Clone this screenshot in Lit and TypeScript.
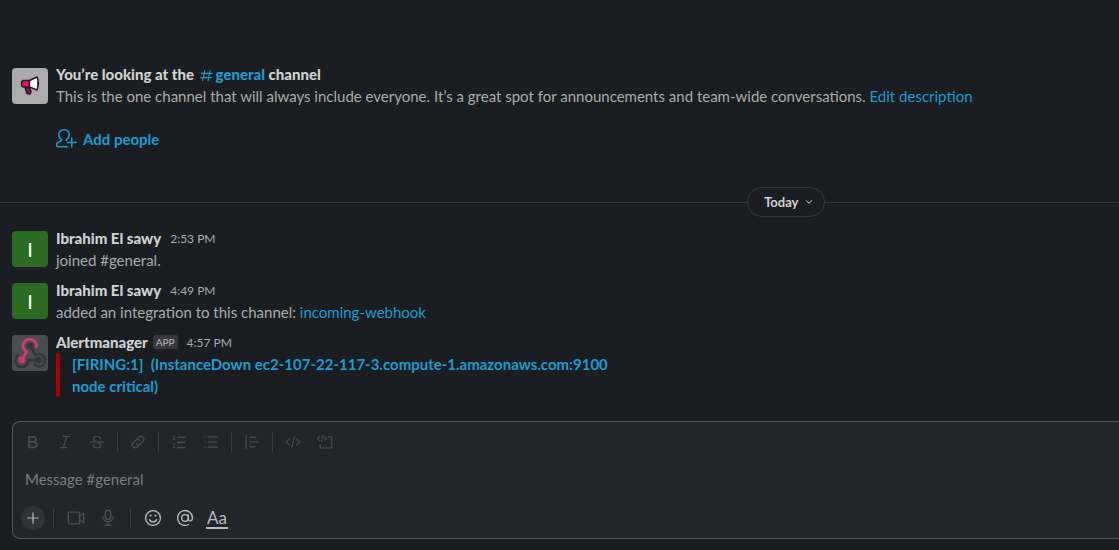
import { LitElement, html, svg, css, nothing, TemplateResult } from "lit";
import { customElement, property } from "lit/decorators.js";

const icons: Record<string, TemplateResult> = {
  bold: svg`<path stroke-width="2.200" d="M5 3.500h5.500a3.200 3.200 0 0 1 0 6.400H5zM5 9.900h6.200a3.400 3.400 0 0 1 0 6.800H5z"/>`,
  italic: svg`<path d="M8 3h8M4 17h8M12 3L8 17"/>`,
  strike: svg`<path d="M1.500 10h17M14.200 6C13.700 4 12 2.800 10 2.800c-2.500 0-4.300 1.300-4.300 3.500C5.700 8.500 7.500 9.400 10 10c2.700.600 4.400 1.500 4.400 3.600s-1.900 3.600-4.400 3.600-4.200-1.200-4.600-3.400"/>`,
  link: svg`<path d="M9.200 5.500l1.700-1.700a3.750 3.750 0 0 1 5.300 5.300l-2.900 2.900a3.750 3.750 0 0 1-5.300 0M10.800 14.500l-1.700 1.700a3.750 3.750 0 0 1-5.300-5.300l2.900-2.900a3.750 3.750 0 0 1 5.300 0"/>`,
  ordered: svg`<path d="M8 4h10M8 10.500h10M8 17h10"/><path stroke-width="1" d="M2.500 3l1.500-1v4.500M2.500 6.500h3M2.500 12.800c.500-1.200 2.700-1 2.700.300 0 1.100-2.700 2.500-2.700 3.900h3"/>`,
  bullets: svg`<path d="M6.500 3.500h11.500M6.500 10h11.500M6.500 16.500h11.500M2 3.500h.500M2 10h.500M2 16.500h.500"/>`,
  quote: svg`<path d="M2.500 2v16M7 4h8M7 10h11M7 16h7"/>`,
  code: svg`<path d="M5.500 6L1.500 10l4 4M14.500 6l4 4-4 4M11.500 3.500l-3 13"/>`,
  block: svg`<path d="M14 3.500h4.500v14H4v-4"/><path stroke-width="1.300" d="M3.500 3L.700 5.700 3.500 8.400M9.200 3L12 5.700 9.200 8.400M7.400 1.500L5.500 9.500"/>`,
  plus: svg`<path d="M10 3.500v13M3.500 10h13"/>`,
  video: svg`<path d="M3 3.500h9.500a1.500 1.500 0 0 1 1.500 1.500v10a1.500 1.500 0 0 1-1.500 1.500H3A1.500 1.500 0 0 1 1.500 15V5A1.500 1.500 0 0 1 3 3.500zM14 8l4.500-3v10L14 12"/>`,
  mic: svg`<path d="M10 1.500a3 3 0 0 1 3 3v4a3 3 0 0 1-6 0v-4a3 3 0 0 1 3-3zM4 8.500a6 5.500 0 0 0 12 0M10 14v4M6.500 18h7"/>`,
  emoji: svg`<circle cx="10" cy="10" r="8.250"/><path d="M6 11.700c.900 3.400 7.100 3.400 8 0"/><circle cx="7.300" cy="7.300" r=".500"/><circle cx="12.700" cy="7.300" r=".500"/>`,
  mention: svg`<circle cx="10" cy="10" r="3.700"/><path d="M13.700 6.300v4.900c0 3 4.550 2.600 4.550-1.200A8.250 8.250 0 1 0 14 17.200"/>`,
  hash: svg`<path d="M7.800 3L4.800 17M15 3l-3 14M3.500 7.200h14M2.500 12.800h14"/>`,
  person: svg`<path d="M5.800 10.800C3.800 9.700 2.800 7.500 2.800 5.600 2.800 2.700 5 .800 8 .800s5.200 1.900 5.200 4.800c0 1.900-1 4.100-3 5.200M5.800 10.800C5.800 11.800 5.300 12 4.300 12.300 1.800 13 .600 14 .600 16.300c0 .900.500 1.500 1.400 1.500h9.500M10.200 10.800v.700M15.800 9v9M11.300 13.500h9"/>`,
  chevron: svg`<path stroke-width="2.500" d="M3.500 7l6.500 6 6.500-6"/>`,
};

@customElement("slack-icon")
export class SlackIcon extends LitElement {
  static styles = css`
    :host { display: inline-flex; width: 18px; height: 18px; }
    .glyph {
      width: 100%; height: 100%; overflow: visible; fill: none;
      stroke: currentColor; stroke-width: 1.5; stroke-linecap: round; stroke-linejoin: round;
    }
  `;
  @property() name = "";
  render() {
    return html`<svg class="glyph" viewBox="0 0 20 20" aria-hidden="true">${icons[this.name]}</svg>`;
  }
}

@customElement("chat-message")
export class ChatMessage extends LitElement {
  static styles = css`
    :host { display: flex; gap: 8px; padding: 4px 12px; }
    .avatar {
      flex: none; width: 36px; height: 36px; margin-top: 4px; border-radius: 4px; overflow: hidden;
      display: flex; align-items: center; justify-content: center;
      background: #2b6b24; color: #fff; font-size: 20px; line-height: 20px;
    }
    .art { width: 36px; height: 36px; }
    .body { flex: 1; min-width: 0; }
    .head { display: flex; align-items: center; height: 22px; }
    .name { font-weight: 900; color: #d1d2d3; }
    .badge {
      margin-left: 5px; padding: 0 3px; border-radius: 2px; background: #35373b;
      color: #b9babd; font-size: 10px; line-height: 14px;
    }
    .time { margin-left: 9px; font-size: 12px; line-height: 22px; padding-top: 1px; color: #ababad; }
  `;
  @property() name = "";
  @property() time = "";
  @property({ type: Boolean }) app = false;
  render() {
    return html`
      <div class="avatar">
        ${this.app
          ? html`<svg class="art" viewBox="0 0 36 36" fill="none" stroke-linecap="round">
              <rect width="36" height="36" fill="#4b4c50" />
              <g stroke="#35363a" stroke-width="2.600">
                <path d="M18 11l5.500 9a6.300 6.300 0 1 1-1.200 9.500" />
                <path d="M26 25H16.300a6.500 6.500 0 1 1-10-5" />
              </g>
              <circle cx="18" cy="11" r="3.300" fill="#35363a" />
              <circle cx="26.500" cy="25" r="3.300" fill="#35363a" />
              <path d="M9.800 25l4.700-8.200a6.700 6.700 0 1 1 10-5.300" stroke="#d23a68" stroke-width="2.800" />
              <circle cx="9.800" cy="25" r="3.300" fill="#d23a68" />
            </svg>`
          : "I"}
      </div>
      <div class="body">
        <div class="head">
          <span class="name">${this.name}</span>
          ${this.app ? html`<span class="badge">APP</span>` : nothing}
          <span class="time">${this.time}</span>
        </div>
        <slot></slot>
      </div>
    `;
  }
}

@customElement("app-root")
export class AppRoot extends LitElement {
  static styles = css`
    :host {
      display: flex; flex-direction: column; min-height: 100vh; box-sizing: border-box;
      padding-top: 63px; overflow: hidden; background: #1a1d21; color: #ababad;
      font: 15px/22px Lato, sans-serif;
    }
    a { color: #1d9bd1; text-decoration: none; }
    button { border: 0; padding: 0; background: none; color: inherit; font: inherit; }
    .intro { display: flex; gap: 8px; padding: 0 12px; }
    .horn { flex: none; width: 36px; height: 36px; margin-top: 5px; }
    .title { margin: 0; font-size: 15px; font-weight: 900; color: #d1d2d3; }
    .desc { margin: 0; }
    .channel { font-weight: 900; }
    .hash { width: 15px; height: 15px; vertical-align: -3px; margin: 0 2px 0 1px; }
    .add { display: flex; align-items: center; gap: 7px; margin-top: 21px; color: #1d9bd1; font-weight: 700; }
    .person { width: 20px; height: 20px; }
    .divider { display: flex; align-items: center; margin: 37px 0 6px; }
    .line { height: 1px; background: #35373b; }
    .before { flex: 28; }
    .after { flex: 11; }
    .day {
      display: flex; align-items: center; gap: 7px; height: 30px; box-sizing: border-box; padding: 0 11px 0 16px;
      border: 1px solid #35373b; border-radius: 15px; color: #d1d2d3; font-size: 13px; font-weight: 700;
    }
    .chev { width: 8px; height: 8px; }
    .attachment { display: flex; gap: 12px; }
    .bar { width: 4px; border-radius: 4px; background: #a30200; }
    .alert { max-width: 568px; font-weight: 700; white-space: pre-wrap; }
    .composer {
      margin: 20px 0 0 12px; padding: 6px 0; background: #222529;
      border: 1px solid #565856; border-right: 0; border-radius: 8px 0 0 8px;
    }
    .tools { display: flex; align-items: center; gap: 4px; padding-left: 6px; color: #4b4d50; }
    .tool { display: flex; align-items: center; justify-content: center; width: 28px; height: 28px; }
    .small { width: 16px; height: 16px; }
    .sep { width: 1px; height: 20px; margin: 0 2px; background: #3b3d41; }
    .actions { padding-left: 8px; }
    .actions .sep { margin: 0 4px; }
    .bright { color: #b9babd; }
    .round { width: 24px; height: 24px; border-radius: 50%; background: #2f3237; }
    .format { padding: 0 1px; border-bottom: 2px solid; font-size: 17px; line-height: 19px; }
    .entry {
      display: block; width: 100%; height: 48px; box-sizing: border-box; padding: 0 12px 2px; border: 0; outline: 0;
      background: none; color: #d1d2d3; font: inherit;
    }
    .entry::placeholder { color: #7b7d80; opacity: 1; }
  `;

  private tool(name: string, label: string, cls = "") {
    const small = cls.includes("round") || !cls;
    return html`<button class="tool ${cls}" aria-label=${label}>
      <slack-icon class=${small ? "small" : ""} name=${name}></slack-icon>
    </button>`;
  }

  render() {
    const sep = html`<span class="sep"></span>`;
    return html`
      <section class="intro">
        <svg class="horn" viewBox="0 0 36 36" aria-hidden="true">
          <rect width="36" height="36" rx="4" fill="#ababad" />
          <g stroke="#32152f" stroke-width="1.600" stroke-linejoin="round">
            <path d="M13 19l2 6.500 3 .5 1-2-1.500-4.500z" fill="#8d1740" />
            <path d="M11 12.500h6.500v6.500H11l-1.300-1.300v-4z" fill="#e01e5a" />
            <path d="M17.500 12.500l7.500-3.500c1.300 2 1.600 9.500 0 13l-7.500-3z" fill="#fff" />
            <path d="M25.700 13.800c1 .500 1 3 0 3.500" fill="none" />
          </g>
        </svg>
        <div>
          <h1 class="title">You’re looking at the <a class="channel" href="#general"><slack-icon class="hash" name="hash"></slack-icon>general</a> channel</h1>
          <p class="desc">This is the one channel that will always include everyone. It’s a great spot for announcements and team-wide conversations. <a href="#edit">Edit description</a></p>
          <button class="add"><slack-icon class="person" name="person"></slack-icon>Add people</button>
        </div>
      </section>
      <div class="divider">
        <span class="line before"></span>
        <button class="day">Today <slack-icon class="chev" name="chevron"></slack-icon></button>
        <span class="line after"></span>
      </div>
      <chat-message name="Ibrahim El sawy" time="2:53 PM">joined #general.</chat-message>
      <chat-message name="Ibrahim El sawy" time="4:49 PM">added an integration to this channel: <a href="#webhook">incoming-webhook</a></chat-message>
      <chat-message name="Alertmanager" time="4:57 PM" app>
        <div class="attachment">
          <span class="bar"></span>
          <a class="alert" href="#alert">[FIRING:1]  (InstanceDown ec2-107-22-117-3.compute-1.amazonaws.com:9100 node critical)</a>
        </div>
      </chat-message>
      <section class="composer">
        <div class="tools">
          ${this.tool("bold", "Bold")}${this.tool("italic", "Italic")}${this.tool("strike", "Strikethrough")}${sep}
          ${this.tool("link", "Link")}${sep}
          ${this.tool("ordered", "Ordered list")}${this.tool("bullets", "Bulleted list")}${sep}
          ${this.tool("quote", "Blockquote")}${sep}
          ${this.tool("code", "Code")}${this.tool("block", "Code block")}
        </div>
        <input class="entry" type="text" aria-label="Message #general" placeholder="Message #general" />
        <div class="tools actions">
          ${this.tool("plus", "Attach", "bright round")}${sep}
          ${this.tool("video", "Record video", "dim")}${this.tool("mic", "Record audio", "dim")}${sep}
          ${this.tool("emoji", "Emoji", "bright")}${this.tool("mention", "Mention someone", "bright")}
          <button class="tool bright"><span class="format">Aa</span></button>
        </div>
      </section>
    `;
  }
}
